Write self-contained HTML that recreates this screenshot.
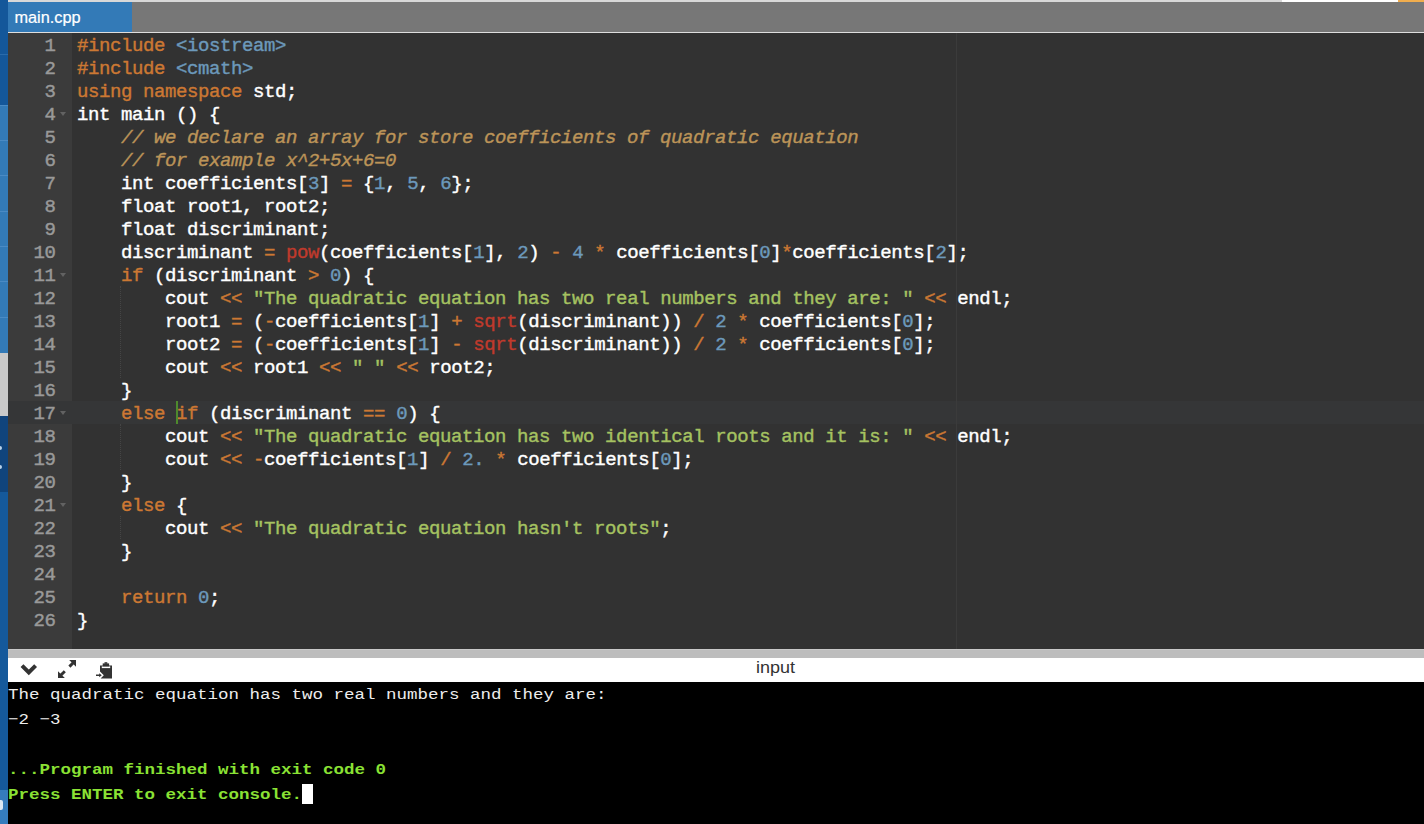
<!DOCTYPE html>
<html><head><meta charset="utf-8"><title>main.cpp</title>
<style>
html,body{margin:0;padding:0;}
body{width:1424px;height:824px;overflow:hidden;position:relative;background:#323232;font-family:"Liberation Sans",sans-serif;}
div,span,pre{box-sizing:border-box;}
.abs{position:absolute;}
#strip{left:0;top:0;width:8px;height:824px;background:#15599b;overflow:hidden;}
#strip i{position:absolute;left:0;width:8px;display:block;}
#topbar{left:8px;top:0;width:1416px;height:2px;background:#d8d8d8;}
#tabs{left:8px;top:2px;width:1416px;height:30px;background:#777777;}
#tab{left:0;top:0;width:124px;height:30px;background:#337ab7;color:#fff;font-size:16.3px;line-height:30px;padding-top:0;padding-left:6.5px;-webkit-text-stroke:0.2px;}
#sep{left:8px;top:32px;width:1416px;height:1px;background:#dedede;}
#ed{left:8px;top:33px;width:1416px;height:616px;background:#323232;overflow:hidden;}
#gut{left:0;top:0;width:64px;height:616px;background:#3b3b3b;}
#act{left:0;top:368px;width:1416px;height:23px;background:#353637;}
.ln{position:absolute;letter-spacing:-0.4px;transform:translateY(1px);left:0;width:47.5px;-webkit-text-stroke:0.45px;height:23px;text-align:right;color:#999;font:19px/23px "Liberation Mono",monospace;}
.fold{position:absolute;left:52.3px;width:0;height:0;border-left:3.6px solid transparent;border-right:3.6px solid transparent;border-top:4.2px solid #626262;}
.cl{position:absolute;letter-spacing:-0.4px;transform:translateY(0.6px);left:69px;height:23px;margin:0;white-space:pre;color:#fff;font:19px/23px "Liberation Mono",monospace;-webkit-text-stroke:0.4px;}
.k{color:#cc7833}.c{color:#6c99bb}.s{color:#a5c261}.m{color:#bc9458;font-style:italic}.f{color:#c03a2c}
#pm{left:948px;top:0;width:1px;height:616px;background:#3b3b3b;}
.ig{position:absolute;width:1px;border-left:1px dotted #454545;}
#cur{left:168px;top:368px;width:2px;height:23px;background:#4e8a2d;}
#grip{left:8px;top:649px;width:1416px;height:9px;background:#bdbdbd;border-top:1px solid #c9c9c9;}
#bar{left:8px;top:658px;width:1416px;height:24px;background:#fff;}
#inp{left:748px;top:-3.4px;font-size:18px;line-height:24px;color:#333;transform:scaleY(0.9);transform-origin:0 18.2px;}
#con{left:8px;top:682px;width:1416px;height:142px;background:#000;}
.tl{position:absolute;left:0;margin:0;white-space:pre;height:25px;color:#ededed;font:17.5px/25px "Liberation Mono",monospace;transform:scaleY(0.86);transform-origin:0 17.2px;}
.g{color:#8ae234;font-weight:bold;}
#tc{left:294px;top:102px;width:11px;height:20px;background:#fff;}
</style></head><body>
<div id="strip" class="abs"><i style="top:0;height:105px;background:#14579a"></i><i style="top:54px;height:1px;background:#2a6bab"></i><i style="top:105px;height:248px;background:#337ab7"></i><i style="top:105px;height:1px;background:#4a8ac4"></i><i style="top:140px;height:1px;background:#4a8ac4"></i><i style="top:175px;height:1px;background:#4a8ac4"></i><i style="top:211px;height:1px;background:#4a8ac4"></i><i style="top:246px;height:1px;background:#4a8ac4"></i><i style="top:281px;height:1px;background:#4a8ac4"></i><i style="top:317px;height:1px;background:#4a8ac4"></i><i style="top:353px;height:63px;background:#c9c9c9"></i><i style="top:416px;height:76px;background:#10447c"></i><i style="top:492px;height:298px;background:#15599b"></i><i style="top:790px;height:34px;background:#357cbd"></i><i style="top:446px;height:4px;width:2px;background:#b9d2ea;border-radius:0 2px 2px 0"></i><i style="top:465px;height:4px;width:2px;background:#b9d2ea;border-radius:0 2px 2px 0"></i><i style="top:800px;height:10px;width:3px;background:#dbe8f5;border-radius:0 2px 2px 0"></i></div>
<div id="topbar" class="abs"><div class="abs" style="left:1274px;top:0;width:116px;height:2px;background:#fff"></div><div class="abs" style="left:1390px;top:0;width:26px;height:2px;background:#f0ad4e"></div></div>
<div id="tabs" class="abs"><div id="tab" class="abs">main.cpp</div></div>
<div id="sep" class="abs"></div>
<div id="ed" class="abs"><div id="act" class="abs"></div><div id="gut" class="abs"><div class="abs" style="left:0;top:368px;width:64px;height:23px;background:#353637"></div><div class="ln" style="top:1px">1</div><div class="ln" style="top:24px">2</div><div class="ln" style="top:47px">3</div><div class="ln" style="top:70px">4</div><div class="ln" style="top:93px">5</div><div class="ln" style="top:116px">6</div><div class="ln" style="top:139px">7</div><div class="ln" style="top:162px">8</div><div class="ln" style="top:185px">9</div><div class="ln" style="top:208px">10</div><div class="ln" style="top:231px">11</div><div class="ln" style="top:254px">12</div><div class="ln" style="top:277px">13</div><div class="ln" style="top:300px">14</div><div class="ln" style="top:323px">15</div><div class="ln" style="top:346px">16</div><div class="ln" style="top:369px">17</div><div class="ln" style="top:392px">18</div><div class="ln" style="top:415px">19</div><div class="ln" style="top:438px">20</div><div class="ln" style="top:461px">21</div><div class="ln" style="top:484px">22</div><div class="ln" style="top:507px">23</div><div class="ln" style="top:530px">24</div><div class="ln" style="top:553px">25</div><div class="ln" style="top:576px">26</div><div class="fold" style="top:79.3px"></div><div class="fold" style="top:240.3px"></div><div class="fold" style="top:378.3px"></div><div class="fold" style="top:470.3px"></div></div>
<div id="pm" class="abs"></div>
<div class="ig" style="left:112px;top:253px;height:92px"></div><div class="ig" style="left:112px;top:391px;height:46px"></div><div class="ig" style="left:112px;top:483px;height:23px"></div>
<pre class="cl" style="top:1px"><span class="k">#include</span> <span class="c">&lt;iostream&gt;</span></pre>
<pre class="cl" style="top:24px"><span class="k">#include</span> <span class="c">&lt;cmath&gt;</span></pre>
<pre class="cl" style="top:47px"><span class="k">using</span> <span class="k">namespace</span> std;</pre>
<pre class="cl" style="top:70px">int main () {</pre>
<pre class="cl" style="top:93px">    <span class="m">// we declare an array for store coefficients of quadratic equation</span></pre>
<pre class="cl" style="top:116px">    <span class="m">// for example x^2+5x+6=0</span></pre>
<pre class="cl" style="top:139px">    int coefficients[<span class="c">3</span>] <span class="k">=</span> {<span class="c">1</span>, <span class="c">5</span>, <span class="c">6</span>};</pre>
<pre class="cl" style="top:162px">    float root1, root2;</pre>
<pre class="cl" style="top:185px">    float discriminant;</pre>
<pre class="cl" style="top:208px">    discriminant <span class="k">=</span> <span class="f">pow</span>(coefficients[<span class="c">1</span>], <span class="c">2</span>) <span class="k">-</span> <span class="c">4</span> <span class="k">*</span> coefficients[<span class="c">0</span>]<span class="k">*</span>coefficients[<span class="c">2</span>];</pre>
<pre class="cl" style="top:231px">    <span class="k">if</span> (discriminant <span class="k">&gt;</span> <span class="c">0</span>) {</pre>
<pre class="cl" style="top:254px">        cout <span class="k">&lt;&lt;</span> <span class="s">"The quadratic equation has two real numbers and they are: "</span> <span class="k">&lt;&lt;</span> endl;</pre>
<pre class="cl" style="top:277px">        root1 <span class="k">=</span> (<span class="k">-</span>coefficients[<span class="c">1</span>] <span class="k">+</span> <span class="f">sqrt</span>(discriminant)) <span class="k">/</span> <span class="c">2</span> <span class="k">*</span> coefficients[<span class="c">0</span>];</pre>
<pre class="cl" style="top:300px">        root2 <span class="k">=</span> (<span class="k">-</span>coefficients[<span class="c">1</span>] <span class="k">-</span> <span class="f">sqrt</span>(discriminant)) <span class="k">/</span> <span class="c">2</span> <span class="k">*</span> coefficients[<span class="c">0</span>];</pre>
<pre class="cl" style="top:323px">        cout <span class="k">&lt;&lt;</span> root1 <span class="k">&lt;&lt;</span> <span class="s">" "</span> <span class="k">&lt;&lt;</span> root2;</pre>
<pre class="cl" style="top:346px">    }</pre>
<pre class="cl" style="top:369px">    <span class="k">else</span> <span class="k">if</span> (discriminant <span class="k">==</span> <span class="c">0</span>) {</pre>
<pre class="cl" style="top:392px">        cout <span class="k">&lt;&lt;</span> <span class="s">"The quadratic equation has two identical roots and it is: "</span> <span class="k">&lt;&lt;</span> endl;</pre>
<pre class="cl" style="top:415px">        cout <span class="k">&lt;&lt;</span> <span class="k">-</span>coefficients[<span class="c">1</span>] <span class="k">/</span> <span class="c">2.</span> <span class="k">*</span> coefficients[<span class="c">0</span>];</pre>
<pre class="cl" style="top:438px">    }</pre>
<pre class="cl" style="top:461px">    <span class="k">else</span> {</pre>
<pre class="cl" style="top:484px">        cout <span class="k">&lt;&lt;</span> <span class="s">"The quadratic equation hasn't roots"</span>;</pre>
<pre class="cl" style="top:507px">    }</pre>
<pre class="cl" style="top:530px"></pre>
<pre class="cl" style="top:553px">    <span class="k">return</span> <span class="c">0</span>;</pre>
<pre class="cl" style="top:576px">}</pre>
<div id="cur" class="abs"></div></div>
<div id="grip" class="abs"></div>
<div id="bar" class="abs"><svg class="abs" style="left:0;top:0" width="130" height="24" viewBox="8 658 130 24"><path d="M22 665.6 L28.8 672.4 L35.6 665.6" fill="none" stroke="#333" stroke-width="4"/><g fill="#333"><path d="M69.2 660 L76 660 L76 666.8 Z"/><path d="M58 671.2 L58 678 L64.8 678 Z"/></g><path d="M74 662 L69.4 666.6 M60 676 L64.8 671.2" stroke="#333" stroke-width="2.9" fill="none"/><g fill="#333"><path d="M100 665.5 L112 665.5 L112 678.6 L100.6 678.6 L103.8 675.2 L100 671.6 Z"/><rect x="101.8" y="666.4" width="8.4" height="1.7" fill="#fff"/><rect x="102.7" y="663.4" width="6.4" height="3" /><rect x="104.5" y="662.2" width="2.8" height="1.6"/><path d="M96 674.4 L99.2 674.4 L99.2 673.2 L101.8 675.2 L99.2 677.2 L99.2 676 L96 676 Z"/></g></svg><div id="inp" class="abs">input</div></div>
<div id="con" class="abs"><pre class="tl " style="top:-0.5px">The quadratic equation has two real numbers and they are: </pre><pre class="tl " style="top:24.5px">−2 −3</pre><pre class="tl " style="top:49.5px"></pre><pre class="tl g" style="top:74.5px">...Program finished with exit code 0</pre><pre class="tl g" style="top:99.5px">Press ENTER to exit console.</pre><div id="tc" class="abs"></div></div>
</body></html>
